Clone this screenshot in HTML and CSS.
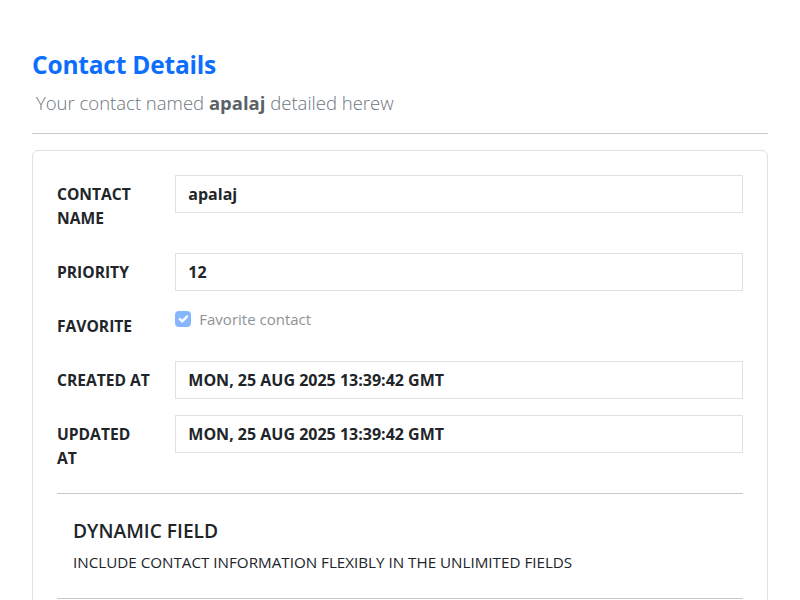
FILE: index.html
```html
<!DOCTYPE html>
<html lang="en">
<head>
<meta charset="utf-8">
<title>Contact Details</title>
<link rel="stylesheet" href="styles.css">
</head>
<body>
<main class="page">
  <h3 class="title">Contact Details</h3>
  <p class="subtitle">Your contact named <strong>apalaj</strong> detailed herew</p>
  <hr class="rule">
  <section class="card">
    <div class="row">
      <label class="label">Contact name</label>
      <div class="field"><div class="input">apalaj</div></div>
    </div>
    <div class="row">
      <label class="label">Priority</label>
      <div class="field"><div class="input">12</div></div>
    </div>
    <div class="row">
      <label class="label">Favorite</label>
      <div class="field">
        <div class="check">
          <span class="box"><svg viewBox="0 0 20 20" width="16" height="16"><path d="M6 10l3 3l6-6" fill="none" stroke="#fff" stroke-width="3" stroke-linecap="round" stroke-linejoin="round"/></svg></span>
          <span class="check-text">Favorite contact</span>
        </div>
      </div>
    </div>
    <div class="row">
      <label class="label">Created at</label>
      <div class="field"><div class="input">MON, 25 AUG 2025 13:39:42 GMT</div></div>
    </div>
    <div class="row">
      <label class="label">Updated at</label>
      <div class="field"><div class="input">MON, 25 AUG 2025 13:39:42 GMT</div></div>
    </div>
    <hr class="rule inner">
    <div class="dynamic">
      <h5 class="dyn-title">DYNAMIC FIELD</h5>
      <p class="dyn-sub">INCLUDE CONTACT INFORMATION FLEXIBLY IN THE UNLIMITED FIELDS</p>
    </div>
    <hr class="rule inner">
  </section>
</main>
</body>
</html>
```

FILE: styles.css
```css
* { box-sizing: border-box; }
html, body { margin: 0; padding: 0; background: #fff; }
body {
  font-family: "Open Sans", "Noto Sans", sans-serif;
  color: #212529;
  font-size: 16px;
  line-height: 1.5;
}
.page { padding: 49px 32px 0 32px; }
.title {
  margin: 0 0 8px 0;
  font-size: 24.5px;
  line-height: 31px;
  font-weight: 700;
  color: #0d6efd;
  letter-spacing: -0.2px;
}
.subtitle {
  margin: 0;
  padding-left: 4px;
  font-size: 18.5px;
  line-height: 30px;
  font-weight: 300;
  color: #6c757d;
}
.subtitle strong { font-weight: 700; color: #5a6168; }
.rule {
  margin: 15px 0 16px 0;
  border: 0;
  border-top: 1px solid #c8c9ca;
  height: 0;
}
.card {
  border: 1px solid #dee2e6;
  border-radius: 6px;
  padding: 24px 24px 0 24px;
}
.row { display: flex; margin: 0 -12px 16px -12px; }
.label {
  flex: 0 0 118.3px;
  padding: 7px 12px;
  font-weight: 700;
  text-transform: uppercase;
  line-height: 24px;
  font-size: 15.6px;
}
.field { flex: 1; padding: 0 12px; }
.input {
  border: 1px solid #dee2e6;
  padding: 6px 12px;
  line-height: 24px;
  font-weight: 700;
  font-size: 16px;
}
.check { display: flex; align-items: flex-start; height: 24px; }
.box {
  width: 16px; height: 16px;
  margin-top: 4px;
  border-radius: 4px;
  background: #86b7fe;
  display: flex;
}
.check-text { margin-left: 8px; color: #909294; font-size: 15px; line-height: 24px; }
.rule.inner { margin: 16px 0; }
.dynamic { padding: 9px 16px; }
.dyn-title {
  margin: 0 0 8px 0;
  font-size: 19.2px;
  line-height: 24px;
  font-weight: 600;
}
.dyn-sub {
  margin: 0;
  font-size: 15.2px;
  line-height: 22px;
  font-weight: 400;
}
```
